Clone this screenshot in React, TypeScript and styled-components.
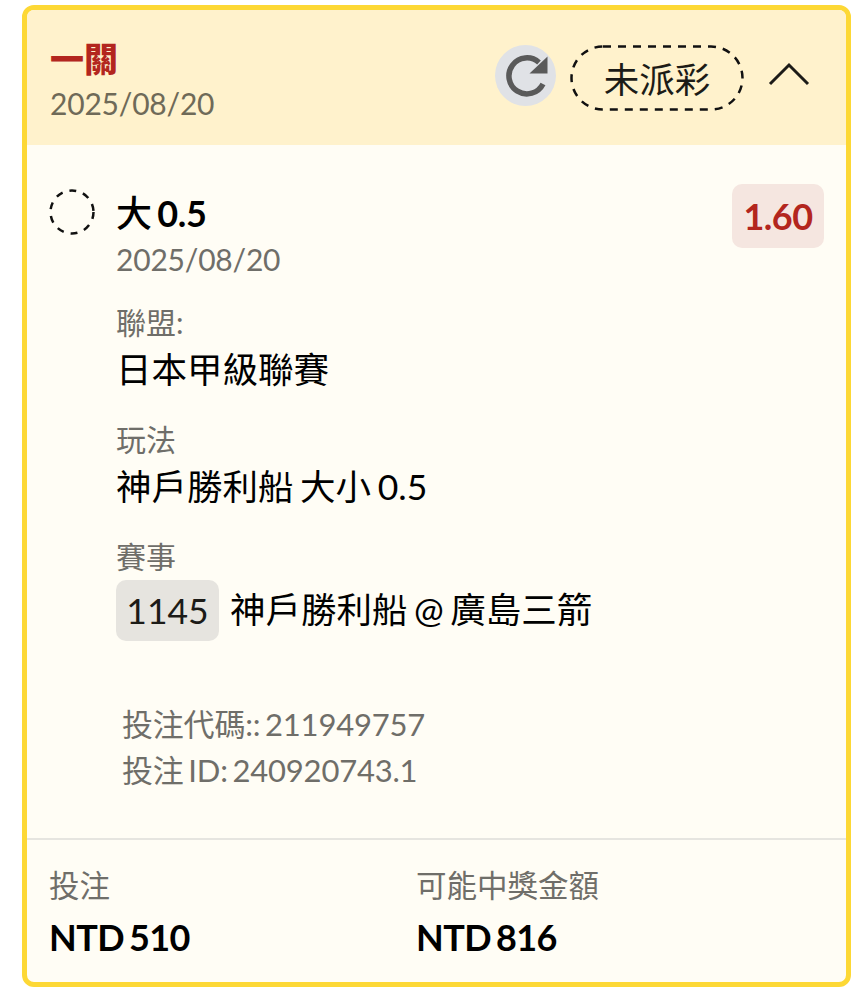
import styled, { createGlobalStyle } from 'styled-components';

const GlobalStyle = createGlobalStyle`
  html, body {
    margin: 0;
    padding: 0;
    background: #fff;
    font-family: Lato, "Noto Sans CJK TC", sans-serif;
  }
`;

const Page = styled.div`
  padding: 5px 15px 13px 22px;
`;

const Card = styled.div`
  box-sizing: border-box;
  width: 829px;
  height: 982px;
  border: 5px solid #fdd835;
  border-radius: 12px;
  overflow: hidden;
  background: #fffdf5;
  display: flex;
  flex-direction: column;
`;

const Header = styled.div`
  box-sizing: border-box;
  height: 135px;
  padding: 0 36px 0 23px;
  background: #fff2cc;
  display: flex;
  align-items: center;
  justify-content: space-between;
`;

const HeaderText = styled.div`
  display: flex;
  flex-direction: column;
  margin-top: 4px;
`;

const Title = styled.div`
  font-size: 34px;
  line-height: 44px;
  font-weight: 900;
  color: #b3261e;
`;

const HeaderDate = styled.div`
  margin-top: 2px;
  font-size: 30px;
  line-height: 40px;
  letter-spacing: -0.2px;
  color: #6f6a58;
`;

const HeaderActions = styled.div`
  display: flex;
  align-items: center;
`;

const RefreshButton = styled.div`
  width: 61px;
  height: 61px;
  margin-bottom: 5px;
  border-radius: 50%;
  background: #e0e2e6;
  display: flex;
  align-items: center;
  justify-content: center;
`;

const StatusPill = styled.div`
  margin-left: 14px;
  width: 174px;
  height: 66px;
  display: flex;
  align-items: center;
  justify-content: center;
  font-size: 35.5px;
  color: #1c1b17;
  position: relative;
`;

const PillOutline = styled.svg`
  position: absolute;
  inset: 0;
`;

const Chevron = styled.svg`
  margin: 0 0 10px 24px;
`;

const Body = styled.div`
  flex: 1;
  padding: 39px 22px 0 22px;
  display: flex;
  flex-direction: column;
`;

const Selection = styled.div`
  display: flex;
  align-items: flex-start;
`;

const Dot = styled.svg`
  flex: none;
  margin-top: 5px;
`;

const SelectionMain = styled.div`
  flex: 1;
  margin-left: 21px;
`;

const SelectionName = styled.div`
  font-size: 36px;
  line-height: 52px;
  font-weight: 700;
  letter-spacing: -0.3px;
  word-spacing: -3px;
  color: #000;
  margin-top: 3px;
`;

const SelectionHan = styled.span`
  font-weight: 500;
`;

const SelectionDate = styled.div`
  font-size: 30px;
  line-height: 40px;
  letter-spacing: -0.2px;
  color: #6f6e69;
`;

const Odds = styled.div`
  box-sizing: border-box;
  width: 92px;
  height: 64px;
  border-radius: 10px;
  background: #f5e6e0;
  color: #b3261e;
  font-size: 36px;
  font-weight: 700;
  letter-spacing: -0.5px;
  display: flex;
  align-items: center;
  justify-content: center;
`;

const Field = styled.div<{ $first?: boolean }>`
  margin: ${(p) => (p.$first ? '21px' : '21px')} 0 0 67px;
`;

const FieldLabel = styled.div`
  font-size: 30px;
  line-height: 44px;
  color: #6f6e69;
`;

const FieldValue = styled.div`
  font-size: 35.5px;
  line-height: 52px;
  word-spacing: -2.5px;
  color: #000;
  display: flex;
  align-items: center;
`;

const MatchCode = styled.span`
  box-sizing: border-box;
  width: 103px;
  height: 61px;
  margin: 2px 11px 0 0;
  border-radius: 10px;
  background: #e6e4df;
  color: #1c1b17;
  display: inline-flex;
  align-items: center;
  justify-content: center;
`;

const BetMeta = styled.div`
  margin: 60px 0 0 73px;
`;

const MetaLine = styled.div`
  font-size: 31px;
  line-height: 46px;
  letter-spacing: -0.2px;
  word-spacing: -3px;
  color: #6f6e69;
`;

const Footer = styled.div`
  box-sizing: border-box;
  height: 144px;
  padding: 22px 22px 0;
  border-top: 2px solid #e6e5e0;
  display: grid;
  grid-template-columns: 367px 1fr;
`;

const FooterLabel = styled.div`
  font-size: 30.5px;
  line-height: 47px;
  color: #6f6e69;
`;

const FooterValue = styled.div`
  font-size: 36px;
  line-height: 57px;
  font-weight: 700;
  letter-spacing: -0.6px;
  word-spacing: -3px;
  color: #000;
`;

const App = () => {
  return (
    <Page>
      <GlobalStyle />
      <Card>
        <Header>
          <HeaderText>
            <Title>一關</Title>
            <HeaderDate>2025/08/20</HeaderDate>
          </HeaderText>
          <HeaderActions>
            <RefreshButton>
              <svg width="46" height="46" viewBox="0 0 46 46">
                <path d="M40 32A18 18 0 1 1 36 10.5" fill="none" stroke="#5a5a5a" strokeWidth="5.5" />
                <path d="M44.5 4.5V21.5H26.5Z" fill="#5a5a5a" />
              </svg>
            </RefreshButton>
            <StatusPill>
              <PillOutline width="174" height="66" viewBox="0 0 174 66">
                <rect x="1.5" y="1.5" width="171" height="63" rx="31.5" fill="none" stroke="#111" strokeWidth="2.5" strokeDasharray="8 7" />
              </PillOutline>
              未派彩
            </StatusPill>
            <Chevron width="42" height="28" viewBox="0 0 42 28">
              <path d="M2 25L21 6L40 25" fill="none" stroke="#1c1b17" strokeWidth="3" />
            </Chevron>
          </HeaderActions>
        </Header>
        <Body>
          <Selection>
            <Dot width="46" height="46" viewBox="0 0 46 46">
              <circle cx="23" cy="23" r="21.5" fill="none" stroke="#111" strokeWidth="2.5" strokeDasharray="7 7" />
            </Dot>
            <SelectionMain>
              <SelectionName><SelectionHan>大</SelectionHan> 0.5</SelectionName>
              <SelectionDate>2025/08/20</SelectionDate>
            </SelectionMain>
            <Odds>1.60</Odds>
          </Selection>
          <Field $first>
            <FieldLabel>聯盟:</FieldLabel>
            <FieldValue>日本甲級聯賽</FieldValue>
          </Field>
          <Field>
            <FieldLabel>玩法</FieldLabel>
            <FieldValue>神戶勝利船 大小 0.5</FieldValue>
          </Field>
          <Field>
            <FieldLabel>賽事</FieldLabel>
            <FieldValue>
              <MatchCode>1145</MatchCode>
              神戶勝利船 @ 廣島三箭
            </FieldValue>
          </Field>
          <BetMeta>
            <MetaLine>投注代碼:: 211949757</MetaLine>
            <MetaLine>投注 ID: 240920743.1</MetaLine>
          </BetMeta>
        </Body>
        <Footer>
          <div>
            <FooterLabel>投注</FooterLabel>
            <FooterValue>NTD 510</FooterValue>
          </div>
          <div>
            <FooterLabel>可能中獎金額</FooterLabel>
            <FooterValue>NTD 816</FooterValue>
          </div>
        </Footer>
      </Card>
    </Page>
  );
};

export default App;
